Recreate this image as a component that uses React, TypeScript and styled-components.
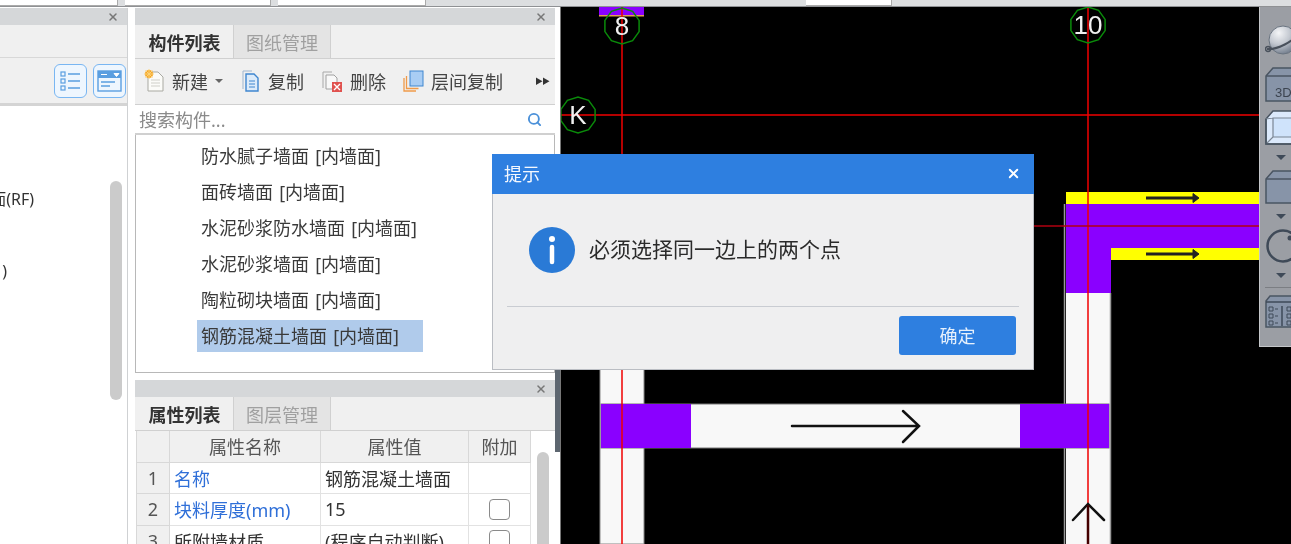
import React from 'react';
import styled, { createGlobalStyle } from 'styled-components';
import { Search, X } from 'lucide-react';

const GlobalStyle = createGlobalStyle`
  html, body {
    margin: 0;
    padding: 0;
    background: #fff;
  }
  * {
    box-sizing: border-box;
  }
`;

const Page = styled.div`
  position: relative;
  width: 1291px;
  height: 544px;
  overflow: hidden;
  background: #fff;
  color: #333;
  font-family: "Noto Sans", "Noto Sans CJK SC", sans-serif;
  font-size: 18px;
  filter: blur(0.5px);
`;

const TopStrip = styled.div`
  display: flex;
  gap: 7px;
  height: 7px;
  background: #dcdee0;
  border-bottom: 1px solid #8f9194;
`;

const TopCell = styled.div<{ $width: number; $offset?: number }>`
  width: ${(p) => p.$width}px;
  margin-left: ${(p) => p.$offset ?? 0}px;
  background: #fff;
  border-right: 1px solid #aaa;
  border-bottom: 1px solid #aaa;
`;

const Main = styled.div`
  display: flex;
  height: 537px;
`;

const LeftPanel = styled.section`
  display: flex;
  flex-direction: column;
  width: 128px;
  margin-top: 1px;
  border-right: 1px solid #cfd1d3;
`;

const Gutter = styled.div`
  width: 7px;
`;

const MiddleColumn = styled.div`
  display: flex;
  flex-direction: column;
  gap: 7px;
  width: 420px;
  margin-top: 1px;
`;

const PanelHeader = styled.div`
  display: flex;
  align-items: center;
  justify-content: flex-end;
  flex: none;
  height: 17px;
  padding-right: 8px;
  background: #d5d7d9;
  color: #777;
`;

const LeftBlank = styled.div`
  height: 33px;
  background: #f0f0f0;
  border-bottom: 1px solid #d8d8d8;
`;

const LeftTools = styled.div`
  display: flex;
  align-items: center;
  justify-content: flex-end;
  gap: 6px;
  height: 48px;
  padding-right: 1px;
  background: #f0f0f0;
  border-bottom: 3px solid #d4d4d4;
`;

const SquareButton = styled.div`
  display: flex;
  align-items: center;
  justify-content: center;
  width: 33px;
  height: 34px;
  background: #eef6fe;
  border: 1.5px solid #79b6f2;
  border-radius: 6px;
`;

const LeftTree = styled.div`
  position: relative;
  flex: 1;
  background: #fff;
`;

const ClippedLabel = styled.div<{ $width: number; $top: number }>`
  display: flex;
  justify-content: flex-end;
  width: ${(p) => p.$width}px;
  margin-top: ${(p) => p.$top}px;
  overflow: hidden;
  white-space: nowrap;
  font-size: 16px;
  line-height: 24px;
`;

const TreeScroll = styled.div`
  position: absolute;
  top: 75px;
  right: 5px;
  width: 12px;
  height: 219px;
  background: #cbcbcb;
  border-radius: 6px;
`;

const Panel = styled.section<{ $height?: number }>`
  display: flex;
  flex-direction: column;
  flex: ${(p) => (p.$height ? 'none' : '1')};
  height: ${(p) => (p.$height ? `${p.$height}px` : 'auto')};
  min-height: 0;
`;

const TabBar = styled.div`
  display: flex;
  flex: none;
  height: 34px;
  padding-left: 1px;
  background: #f0f0f0;
  border-bottom: 1px solid #d0d0d0;
`;

const Tab = styled.div<{ $active?: boolean }>`
  display: flex;
  align-items: center;
  justify-content: center;
  width: ${(p) => (p.$active ? '97px' : '98px')};
  background: ${(p) => (p.$active ? '#f0f0f0' : '#e4e4e4')};
  border-right: ${(p) => (p.$active ? 'none' : '1px solid #d0d0d0')};
  border-left: ${(p) => (p.$active ? 'none' : '1px solid #d0d0d0')};
  color: ${(p) => (p.$active ? '#333' : '#a0a0a0')};
  font-weight: ${(p) => (p.$active ? 700 : 400)};
`;

const Toolbar = styled.div`
  display: flex;
  align-items: center;
  gap: 17px;
  flex: none;
  height: 46px;
  padding: 0 6px 2px 9px;
  background: #f0f0f0;
  border-bottom: 1px solid #d0d0d0;
`;

const ToolButton = styled.div`
  display: flex;
  align-items: center;
  gap: 7px;
  color: #444;
`;

const Caret = styled.span`
  width: 0;
  height: 0;
  margin-right: 1px;
  border-top: 4px solid #666;
  border-left: 4px solid transparent;
  border-right: 4px solid transparent;
`;

const MoreArrows = styled.span`
  margin-left: auto;
  color: #333;
  font-size: 8px;
  letter-spacing: -1px;
`;

const SearchRow = styled.div`
  display: flex;
  align-items: center;
  justify-content: space-between;
  flex: none;
  height: 30px;
  padding: 0 13px 0 4px;
  background: #fff;
  border-bottom: 2px solid #d0d0d0;
  color: #8a8a8a;
`;

const ItemList = styled.ul`
  flex: 1;
  margin: 0;
  padding: 3px 0 0 61px;
  list-style: none;
  background: #fff;
  border-left: 1px solid #b8b8b8;
  border-right: 1px solid #b8b8b8;
  border-bottom: 1px solid #b8b8b8;
`;

const Item = styled.li<{ $selected?: boolean }>`
  width: ${(p) => (p.$selected ? '226px' : 'auto')};
  height: ${(p) => (p.$selected ? '32px' : '36px')};
  margin-top: ${(p) => (p.$selected ? '2px' : '0')};
  padding-left: 4px;
  background: ${(p) => (p.$selected ? '#b0cbeb' : 'transparent')};
  color: #3a3a3a;
  line-height: ${(p) => (p.$selected ? '32px' : '36px')};
  word-spacing: 1.5px;
  white-space: nowrap;
`;

const PropertyBody = styled.div`
  position: relative;
  flex: 1;
  padding-left: 1px;
  overflow: hidden;
`;

const PropertyTable = styled.table`
  width: 394px;
  border-collapse: collapse;
  table-layout: fixed;
`;

const HeadCell = styled.th<{ $width: number }>`
  width: ${(p) => p.$width}px;
  height: 31px;
  padding: 0;
  background: #f0f0f0;
  border: 1px solid #d8d8d8;
  border-top: none;
  color: #555;
  font-weight: 400;
`;

const IndexCell = styled.td`
  height: 31.5px;
  padding: 0;
  background: #f0f0f0;
  border: 1px solid #d8d8d8;
  color: #555;
  text-align: center;
`;

const NameCell = styled.td<{ $plain?: boolean }>`
  padding: 0 0 0 4px;
  border: 1px solid #e2e2e2;
  color: ${(p) => (p.$plain ? '#333' : '#2f6fd8')};
  white-space: nowrap;
  overflow: hidden;
`;

const ValueCell = styled.td`
  padding: 0 0 0 4px;
  border: 1px solid #e2e2e2;
  color: #333;
  white-space: nowrap;
  overflow: hidden;
`;

const CheckCell = styled.td`
  padding: 0;
  border: 1px solid #e2e2e2;
`;

const CheckBox = styled.div`
  width: 21px;
  height: 21px;
  margin: 0 auto;
  border: 1.5px solid #8a8a8a;
  border-radius: 4px;
  background: #fff;
`;

const PropertyScroll = styled.div`
  position: absolute;
  top: 21px;
  left: 402px;
  width: 12px;
  height: 120px;
  background: #cbcbcb;
  border-radius: 6px;
`;

const Splitter = styled.div`
  width: 5px;
  padding-top: 363px;
`;

const SplitterGrip = styled.div`
  height: 82px;
  background: #5d6670;
`;

const Canvas = styled.main`
  position: relative;
  flex: 1;
  background: #000;
  border-left: 1px solid #777;
  overflow: hidden;
`;

const CadDrawing = styled.svg`
  display: block;
  width: 730px;
  height: 537px;
`;

const ViewBar = styled.aside`
  position: absolute;
  top: 0;
  right: 0;
  display: flex;
  flex-direction: column;
  align-items: flex-start;
  width: 32px;
  height: 340px;
  padding: 16px 0 0 5px;
  overflow: hidden;
  background: #9b9ea4;
  border-left: 1px solid #c4c6c9;
  border-bottom: 1px solid #c4c6c9;
`;

const ViewIcon = styled.svg<{ $after?: number }>`
  flex: none;
  margin-bottom: ${(p) => p.$after ?? 0}px;
`;

const ViewCaret = styled.span`
  flex: none;
  width: 0;
  height: 0;
  margin: 0 0 9px 11px;
  border-top: 5px solid #3f4a58;
  border-left: 5px solid transparent;
  border-right: 5px solid transparent;
`;

const ViewRule = styled.div`
  flex: none;
  width: 40px;
  height: 1px;
  margin: 0 0 6px;
  background: #7b7e83;
`;

const Dialog = styled.div`
  position: absolute;
  top: 154px;
  left: 492px;
  display: flex;
  flex-direction: column;
  width: 542px;
  height: 216px;
  background: #efeff0;
  border: 1px solid #babdc3;
  border-top: none;
`;

const DialogTitle = styled.header`
  display: flex;
  align-items: center;
  justify-content: space-between;
  flex: none;
  height: 40px;
  margin: 0 -1px;
  padding: 0 13px 2px 12px;
  background: #2e7fe0;
  color: #f4f8fe;
`;

const DialogBody = styled.div`
  display: flex;
  align-items: center;
  gap: 14px;
  height: 112px;
  padding: 0 0 0 36px;
  font-size: 21px;
  color: #2a2a2a;
`;

const InfoMessage = styled.span`
  margin-top: -4px;
`;

const InfoBadge = styled.span`
  display: flex;
  align-items: center;
  justify-content: center;
  width: 46px;
  height: 46px;
  background: #2a7ad6;
  border-radius: 50%;
`;

const DialogRule = styled.div`
  height: 1px;
  margin: 0 14px;
  background: #c9ccd2;
`;

const DialogFooter = styled.footer`
  display: flex;
  justify-content: flex-end;
  padding: 9px 17px 0 0;
`;

const PrimaryButton = styled.div`
  display: flex;
  align-items: center;
  justify-content: center;
  width: 117px;
  height: 39px;
  padding-bottom: 2px;
  background: #2e7fe0;
  border-radius: 3px;
  color: #e6f0fc;
`;

const items = [
  '防水腻子墙面 [内墙面]',
  '面砖墙面 [内墙面]',
  '水泥砂浆防水墙面 [内墙面]',
  '水泥砂浆墙面 [内墙面]',
  '陶粒砌块墙面 [内墙面]',
];

const decagon = (cx: number, cy: number, r: number) =>
  Array.from({ length: 10 }, (_, i) => {
    const a = (Math.PI / 5) * i + Math.PI / 10;
    return `${(cx + r * Math.cos(a)).toFixed(1)},${(cy + r * Math.sin(a)).toFixed(1)}`;
  }).join(' ');

const NewIcon = () => (
  <svg width="21" height="24" viewBox="0 0 21 24">
    <path d="M4 3h10l5 5v14H4z" fill="#fbfbf8" stroke="#a9a9a2" />
    <path d="M7 11h9M7 14h9M7 17h9" stroke="#cfcfc8" />
    <circle cx="5" cy="5" r="4" fill="#f6a623" />
    <path d="M5 0v10M0 5h10M1.500 1.500l7 7M8.500 1.500l-7 7" stroke="#fbd27a" />
  </svg>
);

const CopyIcon = () => (
  <svg width="20" height="24" viewBox="0 0 20 24">
    <path d="M2 20V2h9" fill="none" stroke="#9fb6cf" />
    <path d="M5 5h8l4 4v13H5z" fill="#dcebfa" stroke="#3f86cf" strokeWidth="1.4" />
    <path d="M8 12h6M8 15h6M8 18h6" stroke="#3f86cf" />
  </svg>
);

const DeleteIcon = () => (
  <svg width="22" height="24" viewBox="0 0 22 24">
    <path d="M2 19V3h9" fill="none" stroke="#a8a8a8" />
    <path d="M5 6h8l3 3v11H5z" fill="#f8f8f8" stroke="#a0a0a0" />
    <rect x="11" y="13" width="10" height="10" fill="#e0524f" />
    <path d="M13 15l6 6M19 15l-6 6" stroke="#fff" strokeWidth="1.4" />
  </svg>
);

const FloorCopyIcon = () => (
  <svg width="21" height="24" viewBox="0 0 21 24">
    <path d="M1 9v13h12" fill="none" stroke="#ef9a4a" strokeWidth="1.3" />
    <path d="M3.500 7v12.500h12" fill="none" stroke="#ef9a4a" strokeWidth="1.3" />
    <rect x="7" y="2" width="13" height="15" fill="#a9cdf4" stroke="#3f86cf" />
  </svg>
);

const ListViewIcon = () => (
  <svg width="23" height="23" viewBox="0 0 23 23" fill="none" stroke="#5a9ee0" strokeWidth="1.2">
    <rect x="2" y="3" width="4" height="4" />
    <rect x="2" y="10" width="4" height="4" />
    <rect x="2" y="17" width="4" height="4" />
    <path d="M9 5h12M9 12h12M9 19h12" strokeWidth="1.6" />
  </svg>
);

const PanelViewIcon = () => (
  <svg width="25" height="24" viewBox="0 0 25 24">
    <rect x="1" y="2" width="23" height="20" fill="#eef6fe" stroke="#5a9ee0" strokeWidth="1.4" />
    <rect x="1" y="2" width="23" height="7" fill="#5a9ee0" />
    <path d="M4 5.500h6M17 4.500h5l-2.500 3z" stroke="#fff" fill="#fff" />
    <path d="M4 13h14M4 17h9" stroke="#5a9ee0" strokeWidth="1.6" />
  </svg>
);

const App: React.FC = () => {
  return (
    <Page>
      <GlobalStyle />
      <TopStrip>
        <TopCell $width={118} />
        <TopCell $width={146} />
        <TopCell $width={148} />
        <TopCell $width={86} $offset={373} />
      </TopStrip>

      <Main>
        <LeftPanel>
          <PanelHeader>
            <X size={12} strokeWidth={3} />
          </PanelHeader>
          <LeftBlank />
          <LeftTools>
            <SquareButton>
              <ListViewIcon />
            </SquareButton>
            <SquareButton>
              <PanelViewIcon />
            </SquareButton>
          </LeftTools>
          <LeftTree>
            <ClippedLabel $width={34} $top={81}>屋面(RF)</ClippedLabel>
            <ClippedLabel $width={7} $top={48}>)</ClippedLabel>
            <TreeScroll />
          </LeftTree>
        </LeftPanel>
        <Gutter />

        <MiddleColumn>
          <Panel $height={365}>
            <PanelHeader>
              <X size={12} strokeWidth={3} />
            </PanelHeader>
            <TabBar>
              <Tab $active>构件列表</Tab>
              <Tab>图纸管理</Tab>
            </TabBar>
            <Toolbar>
              <ToolButton>
                <NewIcon />
                新建
                <Caret />
              </ToolButton>
              <ToolButton>
                <CopyIcon />
                复制
              </ToolButton>
              <ToolButton>
                <DeleteIcon />
                删除
              </ToolButton>
              <ToolButton>
                <FloorCopyIcon />
                层间复制
              </ToolButton>
              <MoreArrows>▶▶</MoreArrows>
            </Toolbar>
            <SearchRow>
              搜索构件...
              <Search size={15} strokeWidth={3} color="#4a90d9" />
            </SearchRow>
            <ItemList>
              {items.map((item) => (
                <Item key={item}>{item}</Item>
              ))}
              <Item $selected>钢筋混凝土墙面 [内墙面]</Item>
            </ItemList>
          </Panel>

          <Panel>
            <PanelHeader>
              <X size={12} strokeWidth={3} />
            </PanelHeader>
            <TabBar>
              <Tab $active>属性列表</Tab>
              <Tab>图层管理</Tab>
            </TabBar>
            <PropertyBody>
              <PropertyTable>
                <thead>
                  <tr>
                    <HeadCell $width={33} />
                    <HeadCell $width={151}>属性名称</HeadCell>
                    <HeadCell $width={148}>属性值</HeadCell>
                    <HeadCell $width={62}>附加</HeadCell>
                  </tr>
                </thead>
                <tbody>
                  <tr>
                    <IndexCell>1</IndexCell>
                    <NameCell>名称</NameCell>
                    <ValueCell>钢筋混凝土墙面</ValueCell>
                    <CheckCell />
                  </tr>
                  <tr>
                    <IndexCell>2</IndexCell>
                    <NameCell>块料厚度(mm)</NameCell>
                    <ValueCell>15</ValueCell>
                    <CheckCell>
                      <CheckBox />
                    </CheckCell>
                  </tr>
                  <tr>
                    <IndexCell>3</IndexCell>
                    <NameCell $plain>所附墙材质</NameCell>
                    <ValueCell>(程序自动判断)</ValueCell>
                    <CheckCell>
                      <CheckBox />
                    </CheckCell>
                  </tr>
                </tbody>
              </PropertyTable>
              <PropertyScroll />
            </PropertyBody>
          </Panel>
        </MiddleColumn>

        <Splitter>
          <SplitterGrip />
        </Splitter>

        <Canvas>
          <CadDrawing viewBox="561 7 730 537">
            {/* walls */}
            <rect x="599" y="7" width="45" height="8" fill="#8a00ff" />
            <rect x="599" y="15" width="45" height="1.500" fill="#e0a050" />
            <rect x="600" y="360" width="44" height="184" fill="#f8f8f8" stroke="#888" />
            <rect x="1066" y="204" width="44" height="340" fill="#f8f8f8" />
            <path d="M1064.500 204V544M1110.500 293V544" stroke="#999" strokeWidth="1.500" />
            <rect x="601" y="404" width="508" height="44" fill="#f8f8f8" stroke="#777" />
            <rect x="601" y="404" width="90" height="44" fill="#8a00ff" />
            <rect x="1020" y="404" width="89" height="44" fill="#8a00ff" />
            <path d="M1066 204H1259V248H1111V293H1066Z" fill="#8a00ff" />
            <path d="M1066 192H1259V204H1066ZM1111 248H1259V260H1111Z" fill="#ffff00" />

            {/* axis lines */}
            <path d="M622 7V544M1088 7V544M560 115H1259" stroke="#f00000" strokeWidth="1.500" />
            <path d="M561 226H1259" stroke="#b00010" strokeWidth="1.500" />

            {/* direction arrows */}
            <path d="M792 426H918M903 411L919 426L903 442" fill="none" stroke="#111" strokeWidth="2.500" strokeLinecap="round" />
            <path d="M1073 520L1088 504L1104 520" fill="none" stroke="#111" strokeWidth="2.500" strokeLinecap="round" />
            <path d="M1088 505V544" stroke="#400" strokeWidth="2.500" />
            <path d="M1146 198H1197M1146 254H1197" stroke="#222" strokeWidth="3" />
            <path d="M1193 193.500L1199 198L1193 202.500ZM1193 249.500L1199 254L1193 258.500Z" fill="#222" stroke="#222" />

            {/* axis bubbles */}
            <polygon points={decagon(622, 26, 18)} fill="none" stroke="#0a8a0a" strokeWidth="1.500" />
            <polygon points={decagon(1088, 25, 18)} fill="none" stroke="#0a8a0a" strokeWidth="1.500" />
            <polygon points={decagon(578, 115, 18)} fill="none" stroke="#0a8a0a" strokeWidth="1.500" />
            <g fill="#f0f0f0" fontFamily='"Liberation Sans", sans-serif' fontSize="26" textAnchor="middle">
              <text x="622" y="35">8</text>
              <text x="1088" y="34">10</text>
              <text x="578" y="124">K</text>
            </g>
          </CadDrawing>

          <ViewBar>
            <ViewIcon width="36" height="34" viewBox="0 0 36 34" $after={10}>
              <defs>
                <radialGradient id="orb" cx="0.35" cy="0.25" r="0.8">
                  <stop offset="0" stopColor="#f4f5f7" />
                  <stop offset="0.5" stopColor="#c3c8d0" />
                  <stop offset="1" stopColor="#6f7a8a" />
                </radialGradient>
              </defs>
              <circle cx="18" cy="17" r="14" fill="url(#orb)" stroke="#6a7480" />
              <path d="M2 26C12 27 28 19 36 8" fill="none" stroke="#49515c" strokeWidth="2" />
              <circle cx="3" cy="26" r="2.500" fill="none" stroke="#49515c" strokeWidth="1.500" />
            </ViewIcon>
            <ViewIcon width="36" height="36" viewBox="0 0 36 36" $after={7}>
              <path d="M1 9L8 1H36V34H1Z" fill="#8794a8" stroke="#4a5562" strokeWidth="1.500" />
              <path d="M1 9H36" stroke="#4a5562" strokeWidth="1.500" />
              <text x="10" y="30" fontFamily='"Liberation Sans", sans-serif' fontSize="13" fill="#3c4450">3D</text>
            </ViewIcon>
            <ViewIcon width="36" height="36" viewBox="0 0 36 36" $after={9}>
              <path d="M1 9L8 1H36V34H1Z" fill="#dbe9fb" stroke="#4a5562" strokeWidth="1.500" />
              <path d="M8 8H36V27H8ZM1 34L8 27M1 9L8 8" fill="#cfe3fb" stroke="#7b8694" strokeWidth="1.200" />
              <path d="M1 9V34H36" fill="none" stroke="#4a5562" strokeWidth="1.500" />
            </ViewIcon>
            <ViewCaret />
            <ViewIcon width="36" height="36" viewBox="0 0 36 36" $after={9}>
              <path d="M1 10L8 2H36V34H1Z" fill="#8794a8" stroke="#4a5562" strokeWidth="1.500" />
              <path d="M1 10H36" stroke="#4a5562" strokeWidth="1.500" />
            </ViewIcon>
            <ViewCaret />
            <ViewIcon width="36" height="36" viewBox="0 0 36 36" $after={9}>
              <circle cx="18" cy="18" r="15.500" fill="none" stroke="#3f4a58" strokeWidth="2.500" />
              <circle cx="25" cy="10" r="2.500" fill="#3f4a58" />
            </ViewIcon>
            <ViewCaret />
            <ViewRule />
            <ViewIcon width="36" height="35" viewBox="0 0 36 35">
              <path d="M1 7L5 2H36V33H1Z" fill="#8794a8" stroke="#4a5562" strokeWidth="1.500" />
              <path d="M1 8H36M17 12V32" stroke="#3f4a58" strokeWidth="1.500" />
              <path d="M4 13h4v4H4zM4 20h4v4H4zM4 27h4v4H4zM22 13h4v4h-4zM22 20h4v4h-4zM22 27h4v4h-4z" fill="none" stroke="#3f4a58" />
              <path d="M10 15h3M10 22h3M10 29h3" stroke="#3f4a58" />
            </ViewIcon>
          </ViewBar>
        </Canvas>
      </Main>

      <Dialog>
        <DialogTitle>
          提示
          <X size={15} strokeWidth={3} color="#fff" />
        </DialogTitle>
        <DialogBody>
          <InfoBadge>
            <svg width="8" height="30" viewBox="0 0 8 30">
              <circle cx="4" cy="4" r="3" fill="#fff" />
              <path d="M4 12V27" stroke="#fff" strokeWidth="4.500" strokeLinecap="round" />
            </svg>
          </InfoBadge>
          <InfoMessage>必须选择同一边上的两个点</InfoMessage>
        </DialogBody>
        <DialogRule />
        <DialogFooter>
          <PrimaryButton>确定</PrimaryButton>
        </DialogFooter>
      </Dialog>
    </Page>
  );
};

export default App;
